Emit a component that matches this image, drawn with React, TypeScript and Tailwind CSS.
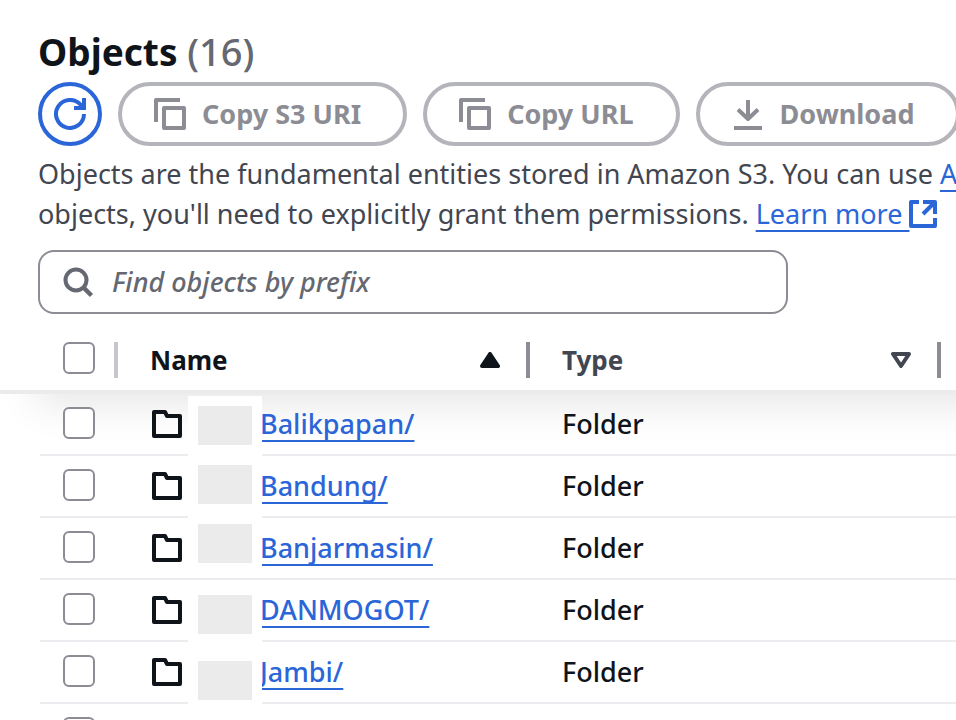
import type { ReactNode } from "react";

type Row = { name: string; mask: string; block: string };

const rows: Row[] = [
  { name: "Balikpapan/", mask: "mt-[2px] h-[60px]", block: "mt-[10px]" },
  { name: "Bandung/", mask: "h-[62px]", block: "mt-[9px]" },
  { name: "Banjarmasin/", mask: "h-[60px]", block: "mt-[6px]" },
  { name: "DANMOGOT/", mask: "h-[62px]", block: "mt-[15px]" },
  { name: "Jambi/", mask: "h-[62px]", block: "mt-[19px]" },
];

function RefreshIcon() {
  return (
    <svg className="size-8" viewBox="0 0 32 32" fill="none" stroke="currentColor" strokeWidth="4" aria-hidden="true">
      <path d="M30 16a14 14 0 1 1-3.400-9.200L30 10" />
      <path d="M30 0v10H20" />
    </svg>
  );
}

function CopyIcon() {
  return (
    <svg className="size-8 shrink-0" viewBox="0 0 32 32" fill="none" stroke="currentColor" strokeWidth="4" strokeLinejoin="round" aria-hidden="true">
      <path d="M26 2H2v22" />
      <path d="M10 10h20v20H10z" />
    </svg>
  );
}

function DownloadIcon() {
  return (
    <svg className="size-8 shrink-0" viewBox="0 0 32 32" fill="none" stroke="currentColor" strokeWidth="4" aria-hidden="true">
      <path d="M16 2v19" />
      <path d="M6 11.500 16 21l10-9.500" strokeLinejoin="round" />
      <path d="M2 30h28" />
    </svg>
  );
}

function SearchIcon() {
  return (
    <svg className="size-8 shrink-0" viewBox="0 0 32 32" fill="none" stroke="#656871" strokeWidth="4" aria-hidden="true">
      <circle cx="14" cy="14" r="10.500" />
      <path d="m21 21 8.500 8.500" strokeWidth="4.500" />
    </svg>
  );
}

function ExternalIcon() {
  return (
    <svg className="inline-block size-7 align-[-4px]" viewBox="0 0 28 28" fill="none" stroke="currentColor" strokeWidth="4" aria-hidden="true">
      <path d="M10 2H2v24h24v-8" strokeLinejoin="round" />
      <path d="M14 2h12v12" strokeLinejoin="round" />
      <path d="M26 2 14 14" />
    </svg>
  );
}

function FolderIcon() {
  return (
    <svg className="size-8 shrink-0" viewBox="0 0 32 32" fill="none" stroke="#0f141a" strokeWidth="4" strokeLinejoin="round" aria-hidden="true">
      <path d="M4 4h11l2 4h13v20H4z" />
    </svg>
  );
}

function ActionButton({ icon, children }: { icon: ReactNode; children: ReactNode }) {
  return (
    <button
      type="button"
      disabled
      className="flex h-16 shrink-0 items-center gap-4 rounded-full border-4 border-[#b4b4bb] pr-[42px] pl-8 font-bold text-[#8c8c94]"
    >
      {icon}
      {children}
    </button>
  );
}

function Checkbox({ label }: { label: string }) {
  return (
    <input
      type="checkbox"
      aria-label={label}
      className="block size-8 appearance-none rounded-md border-2 border-[#8c8c94] bg-white checked:bg-[#2b66d9]"
    />
  );
}

const linkClass = "text-[#2b66d9] underline decoration-2 underline-offset-[6px]";

export default function App() {
  return (
    <main className="h-screen overflow-hidden bg-white pt-6 font-['Noto_Sans','Open_Sans',sans-serif] text-[27px] leading-10 font-medium text-[#0f141a]">
      <header className="pl-[38px]">
        <h2 className="h-[58px] text-[37px] leading-[54px] font-bold">
          Objects <span className="text-[38px] font-medium text-[#656871]">(16)</span>
        </h2>
        <div className="flex gap-4">
          <button
            type="button"
            aria-label="Refresh"
            className="flex size-16 shrink-0 items-center justify-center rounded-full border-4 border-[#2b66d9] text-[#2b66d9]"
          >
            <RefreshIcon />
          </button>
          <ActionButton icon={<CopyIcon />}>Copy S3 URI</ActionButton>
          <ActionButton icon={<CopyIcon />}>Copy URL</ActionButton>
          <ActionButton icon={<DownloadIcon />}>Download</ActionButton>
        </div>
        <p className="mt-2 font-normal whitespace-nowrap text-[#424650]">
          Objects are the fundamental entities stored in Amazon S3. You can use{" "}
          <a href="#inventory" className={linkClass}>Amazon S3 inventory</a>
          <br />
          objects, you'll need to explicitly grant them permissions.{" "}
          <a href="#learn" className={linkClass}>
            Learn more <ExternalIcon />
          </a>
        </p>
        <label className="mt-4 flex h-16 max-w-[750px] items-center gap-[18px] rounded-2xl border-2 border-[#8c8c94] pl-[22px]">
          <SearchIcon />
          <input
            type="text"
            aria-label="Find objects by prefix"
            placeholder="Find objects by prefix"
            className="min-w-0 flex-1 outline-none placeholder:text-[#656871] placeholder:italic"
          />
        </label>
      </header>

      <section className="relative mt-4">
        <div className="absolute top-0 right-[-40px] left-[38px] h-16 shadow-[0_8px_40px_2px_rgba(0,7,22,0.1)] [clip-path:inset(60px_0_-60px_-38px)]" />
        <div className="absolute inset-x-0 top-[60px] h-1 bg-[#e9ebed]" />
        <table className="relative ml-10 w-full min-w-[1100px] table-fixed border-separate border-spacing-0">
          <colgroup>
            <col className="w-[78px]" />
            <col className="w-[412px]" />
            <col className="w-[411px]" />
            <col />
          </colgroup>
          <thead className="text-[26px]">
            <tr className="h-16 text-left align-top">
              <th className="p-0">
                <div className="flex justify-between pt-3 pl-[23px]">
                  <Checkbox label="Select all" />
                  <span className="h-9 w-1 bg-[#c6c6cd]" />
                </div>
              </th>
              <th className="p-0" aria-sort="ascending">
                <div className="flex h-[60px] items-center pl-8">
                  <button type="button" className="flex flex-1 items-center justify-between pr-[26px] font-bold">
                    Name
                    <svg className="h-4 w-5" viewBox="0 0 20 16" aria-hidden="true">
                      <path d="M10 2 18 14H2z" fill="#0f141a" stroke="#0f141a" strokeWidth="4" strokeLinejoin="round" />
                    </svg>
                  </button>
                  <span className="h-9 w-1 bg-[#8c8c94]" />
                </div>
              </th>
              <th className="p-0">
                <div className="flex h-[60px] items-center pl-8">
                  <button type="button" className="flex flex-1 items-center justify-between pr-[26px] font-bold text-[#424650]">
                    Type
                    <svg className="h-4 w-5" viewBox="0 0 20 16" aria-hidden="true">
                      <path d="M2 2h16l-8 12z" fill="none" stroke="#424650" strokeWidth="4" strokeLinejoin="round" />
                    </svg>
                  </button>
                  <span className="h-9 w-1 bg-[#8c8c94]" />
                </div>
              </th>
              <th className="p-0" />
            </tr>
          </thead>
          <tbody>
            {rows.map((row) => (
              <tr key={row.name} className="align-top">
                <td className="border-b-2 border-[#ebebf0] p-0 pt-[13px] pl-[23px]">
                  <Checkbox label={`Select ${row.name}`} />
                </td>
                <td className="border-b-2 border-[#ebebf0] p-0">
                  <div className="flex h-[60px] items-center pl-8">
                    <FolderIcon />
                    <span className={`relative z-10 -mr-[2px] ml-[6px] flex w-[74px] shrink-0 items-start self-start bg-white ${row.mask}`}>
                      <span className={`ml-[10px] h-[39px] w-[54px] bg-[#ebebeb] ${row.block}`} />
                    </span>
                    <a href="#folder" className={linkClass}>{row.name}</a>
                  </div>
                </td>
                <td className="h-[62px] border-b-2 border-[#ebebf0] p-0">
                  <div className="flex h-[60px] items-center pl-8">Folder</div>
                </td>
                <td className="border-b-2 border-[#ebebf0] p-0" />
              </tr>
            ))}
            <tr className="align-top">
              <td className="p-0 pt-[13px] pl-[23px]">
                <Checkbox label="Select next object" />
              </td>
            </tr>
          </tbody>
        </table>
      </section>
    </main>
  );
}
